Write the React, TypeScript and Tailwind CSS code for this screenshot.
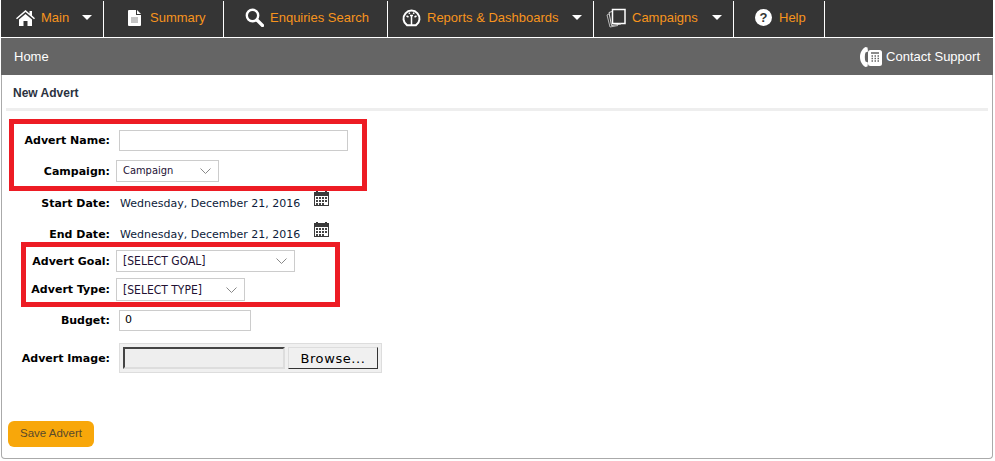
import { ReactNode } from 'react';

const HomeIcon = () => (
  <svg width="19" height="16" viewBox="0 0 19 16" fill="white">
    <path d="M9.5 0 L13.5 3.4 V1 H16 V5.5 L19 8.2 L18 9.2 L9.5 2 L1 9.2 L0 8.2 Z" />
    <path d="M3 9.6 L9.5 4 L16 9.6 V16 H11.5 V11 H7.5 V16 H3 Z" />
  </svg>
);

const DocIcon = () => (
  <svg width="13" height="16" viewBox="0 0 13 16">
    <path d="M1 0 H8 V5 H13 V15 Q13 16 12 16 H1 Q0 16 0 15 V1 Q0 0 1 0 Z" fill="white" />
    <path d="M9 0 L13 4 H9 Z" fill="white" />
    <path d="M3 8 H10 M3 10 H10 M3 12 H10" stroke="#888" strokeWidth="1" />
  </svg>
);

const SearchIcon = () => (
  <svg width="19" height="19" viewBox="0 0 19 19" fill="none" stroke="white">
    <circle cx="7.5" cy="7.5" r="5.7" strokeWidth="2.4" />
    <path d="M12 12 L17.5 17.5" strokeWidth="3.2" strokeLinecap="round" />
  </svg>
);

const GaugeIcon = () => (
  <svg width="19" height="19" viewBox="0 0 19 19" fill="none" stroke="white">
    <path d="M5 17.2 A8 8 0 1 1 14 17.2 Z" strokeWidth="2" />
    <path d="M9.5 7 V17 M8 7.5 H11 M4.5 8 L6.5 9 M14.5 8 L12.5 9 M7 4.5 L7.6 6 M12 4.5 L11.4 6" strokeWidth="1.5" />
  </svg>
);

const CardsIcon = () => (
  <svg width="20" height="20" viewBox="0 0 20 20" fill="none" stroke="white">
    <rect x="6.5" y="1.5" width="12.5" height="14" fill="#353535" strokeWidth="1.5" />
    <path d="M6 3.5 L3 4.5 L5.5 17.5 L15 16" strokeWidth="1" stroke="#ddd" />
    <path d="M3 6 L1 7 L4 19 L12 17.5" strokeWidth="1" stroke="#bbb" />
  </svg>
);

const HelpIcon = () => (
  <svg width="17" height="17" viewBox="0 0 17 17">
    <circle cx="8.5" cy="8.5" r="8.5" fill="white" />
    <text x="8.5" y="13" textAnchor="middle" fontSize="13" fontWeight="700" fontFamily="Liberation Sans" fill="#353535">?</text>
  </svg>
);

const PhoneIcon = () => (
  <svg width="22" height="22" viewBox="0 0 22 22">
    <path d="M5.5 1 C2 3 0 7 0 11 C0 15 2 19 5.5 21 L7.5 20.5 L8 16.5 L5.5 15.5 C4.6 13 4.6 9 5.5 6.5 L8 5.5 L7.5 1.5 Z" fill="white" />
    <rect x="8" y="4" width="14" height="16" rx="2.5" fill="white" />
    <path d="M11 7 H19 M11.5 10 H13 M14.5 10 H16 M17.5 10 H19 M11.5 12.5 H13 M14.5 12.5 H16 M17.5 12.5 H19 M11.5 15 H13 M14.5 15 H16 M17.5 15 H19" stroke="#666" strokeWidth="1.5" />
  </svg>
);

const CalendarIcon = () => (
  <svg width="15" height="15" viewBox="0 0 15 15" className="block">
    <rect x="0" y="1" width="15" height="14" fill="#3a3a3a" />
    <rect x="2" y="0" width="2" height="1" fill="#3a3a3a" />
    <rect x="11" y="0" width="2" height="1" fill="#3a3a3a" />
    <rect x="1" y="5" width="13" height="9" fill="#fff" />
    <path d="M2 6 H4 V8 H2 Z M5 6 H7 V8 H5 Z M8 6 H10 V8 H8 Z M11 6 H13 V8 H11 Z M2 9 H4 V11 H2 Z M5 9 H7 V11 H5 Z M8 9 H10 V11 H8 Z M11 9 H13 V11 H11 Z M5 12 H7 V14 H5 Z M8 12 H10 V14 H8 Z M2 12 H4 V14 H2 Z" fill="#444" />
  </svg>
);

const Caret = () => <span className="w-0 h-0 border-x-[5px] border-x-transparent border-t-[5px] border-t-white" />;

function NavItem({ icon, label, width, caret, pl, gap }: { icon: ReactNode; label: string; width: string; caret?: boolean; pl: string; gap: string }) {
  return (
    <div className={`flex items-center h-[36px] mt-px pb-[3px] border-r border-white ${width} ${pl}`}>
      <span className={`flex items-center ${gap}`}>{icon}</span>
      <span className="text-[#f7941d] text-[13px]">{label}</span>
      {caret && <span className="flex ml-auto mr-[11px]"><Caret /></span>}
    </div>
  );
}

function Row({ label, className, children }: { label: string; className: string; children: ReactNode }) {
  return (
    <div className={`flex items-center ${className}`}>
      <div className="w-[108px] shrink-0 pt-[2px] text-right font-bold text-[11px] text-black font-['DejaVu_Sans',sans-serif]">{label}</div>
      {children}
    </div>
  );
}

function Select({ label, width, height, textSize }: { label: string; width: string; height: string; textSize: string }) {
  return (
    <div className={`flex items-center justify-between ml-[6px] pl-[6px] pr-[7px] border border-[#ccc] bg-white text-[#221133] font-['DejaVu_Sans_Condensed','DejaVu_Sans',sans-serif] ${textSize} ${width} ${height}`}>
      <span>{label}</span>
      <svg width="11" height="6" viewBox="0 0 11 6" fill="none" stroke="#888"><path d="M0.5 0.5 L5.5 5.5 L10.5 0.5" /></svg>
    </div>
  );
}

const Input = ({ width, value }: { width: string; value?: string }) => (
  <div className={`ml-[9px] h-[21px] pl-[5px] flex items-center border border-[#ccc] bg-white text-[11px] text-black font-['DejaVu_Sans',sans-serif] ${width}`}>{value}</div>
);

const DateValue = () => (
  <span className="ml-[10px] pt-[2px] text-[11px] text-[#0c1b3a] font-['DejaVu_Sans',sans-serif] whitespace-nowrap">Wednesday, December 21, 2016</span>
);

export default function App() {
  return (
    <div className="w-[995px] h-[461px] overflow-hidden bg-white font-['Liberation_Sans',sans-serif] pl-px pr-[2px]">
      <nav className="flex h-[37px] bg-[#353535]">
        <NavItem icon={<HomeIcon />} label="Main" width="w-[103px]" pl="pl-[15px]" gap="mr-[6px]" caret />
        <NavItem icon={<DocIcon />} label="Summary" width="w-[120px]" pl="pl-[24px]" gap="mr-[9px]" />
        <NavItem icon={<SearchIcon />} label="Enquiries Search" width="w-[164px]" pl="pl-[21px]" gap="mr-[6px]" />
        <NavItem icon={<GaugeIcon />} label="Reports & Dashboards" width="w-[206px]" pl="pl-[14px]" gap="mr-[6px]" caret />
        <NavItem icon={<CardsIcon />} label="Campaigns" width="w-[140px]" pl="pl-[12px]" gap="mr-[6px]" caret />
        <NavItem icon={<HelpIcon />} label="Help" width="w-[91px]" pl="pl-[21px]" gap="mr-[7px]" />
      </nav>
      <div className="relative mt-px h-[421px] rounded-b-[4px] border-x border-b border-[#aaa]">
        <header className="flex items-center justify-between h-[37px] -mx-px pl-[13px] pr-[13px] bg-[#656565] text-white text-[13px]">
          <span>Home</span>
          <span className="flex items-center gap-[4px]"><PhoneIcon />Contact Support</span>
        </header>
        <div className="h-[36px] mx-[4px] pl-[7px] pt-[2px] border-b-[3px] border-[#eee] flex items-center text-[12px] font-bold text-[#2b3240]">New Advert</div>

        <div className="pt-[19px]">
          <Row label="Advert Name:" className="h-[21px]"><Input width="w-[229px]" /></Row>
          <Row label="Campaign:" className="h-[22px] mt-[9px]"><Select label="Campaign" width="w-[103px]" height="h-[22px]" textSize="text-[11px]" /></Row>
          <Row label="Start Date:" className="h-[20px] mt-[11px]">
            <DateValue />
            <span className="ml-[14px] -mt-[10px]"><CalendarIcon /></span>
          </Row>
          <Row label="End Date:" className="h-[20px] mt-[11px]">
            <DateValue />
            <span className="ml-[14px] -mt-[10px]"><CalendarIcon /></span>
          </Row>
          <Row label="Advert Goal:" className="h-[22px] mt-[6px]"><Select label="[SELECT GOAL]" width="w-[179px]" height="h-[22px]" textSize="text-[12px]" /></Row>
          <Row label="Advert Type:" className="h-[23px] mt-[6px]"><Select label="[SELECT TYPE]" width="w-[129px]" height="h-[23px]" textSize="text-[12px]" /></Row>
          <Row label="Budget:" className="h-[21px] mt-[9px]"><Input width="w-[132px]" value="0" /></Row>
          <Row label="Advert Image:" className="h-[30px] mt-[12px]">
            <div className="ml-[9px] w-[263px] h-[30px] flex items-center pl-[3px] bg-[#f0f0f0] border border-[#ddd]">
              <div className="w-[162px] h-[22px] bg-[#eee] border-t-2 border-l-2 border-t-[#444] border-l-[#444] border-b-2 border-r-2 border-b-[#ddd] border-r-[#ddd]" />
              <div className="ml-[3px] w-[90px] h-[22px] pt-[2px] flex items-center justify-center bg-[#f0f0f0] border-r border-b border-[#333] border-l border-l-[#ddd] border-t border-t-[#ddd] text-[13px] text-black tracking-[0.6px] font-['DejaVu_Sans',sans-serif]">Browse...</div>
            </div>
          </Row>
          <button className="mt-[48px] ml-[6px] w-[86px] h-[26px] rounded-[6px] bg-[#f8a70a] text-[11.5px] text-[#5a4a2a]">Save Advert</button>
        </div>

        {/* red markup boxes drawn over the form */}
        <div className="absolute left-[7px] top-[81px] w-[358px] h-[72px] border-[5px] border-[#ed1c24] pointer-events-none" />
        <div className="absolute left-[19px] top-[204px] w-[319px] h-[65px] border-[5px] border-[#ed1c24] pointer-events-none" />
      </div>
    </div>
  );
}
